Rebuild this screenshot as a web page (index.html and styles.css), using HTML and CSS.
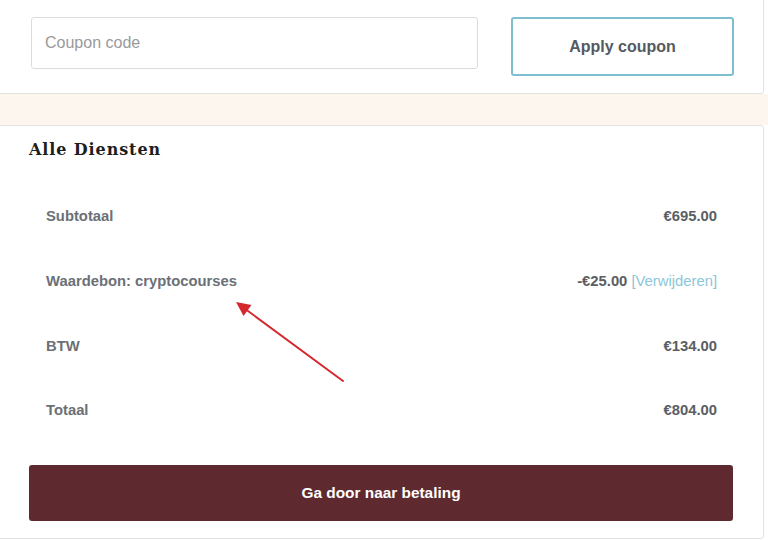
FILE: index.html
```html
<!DOCTYPE html>
<html lang="nl">
<head>
<meta charset="utf-8">
<title>Winkelwagen</title>
<link rel="stylesheet" href="styles.css">
</head>
<body>
<div class="page">
  <section class="card coupon-card">
    <div class="coupon-row">
      <input class="coupon-input" type="text" placeholder="Coupon code">
      <button class="btn-apply" type="button">Apply coupon</button>
    </div>
  </section>
  <div class="band"></div>
  <section class="card totals-card">
    <h2 class="totals-title">Alle Diensten</h2>
    <div class="rows">
      <div class="row"><span class="label">Subtotaal</span><span class="value">€695.00</span></div>
      <div class="row"><span class="label">Waardebon: cryptocourses</span><span class="value">-€25.00 <a class="remove" href="#">[Verwijderen]</a></span></div>
      <div class="row"><span class="label">BTW</span><span class="value">€134.00</span></div>
      <div class="row"><span class="label">Totaal</span><span class="value">€804.00</span></div>
    </div>
    <button class="btn-checkout" type="button">Ga door naar betaling</button>
  </section>
  <svg class="arrow" width="768" height="540" viewBox="0 0 768 540" aria-hidden="true">
    <line x1="343" y1="385" x2="246" y2="313.5" stroke="#d4282e" stroke-width="2" stroke-linecap="round"/>
    <polygon points="236,306 251.5,309 243.5,320" fill="#d4282e"/>
  </svg>
</div>
</body>
</html>
```
FILE: styles.css
```css
* { box-sizing: border-box; }
html, body { margin: 0; padding: 0; background: #ffffff; }
body {
  font-family: "Liberation Sans", Arial, sans-serif;
  width: 768px;
  height: 540px;
  overflow: hidden;
}
.page { position: relative; width: 768px; height: 540px; }
.card {
  background: #ffffff;
  border: 1px solid #e4e2df;
  border-radius: 3px;
  margin-left: -4px;
  width: 768px;
}
.coupon-card {
  margin-top: -4px;
  height: 98px;
  padding: 20px 0 0 34px;
}
.coupon-row { display: flex; align-items: flex-start; gap: 33px; }
.coupon-input {
  width: 447px;
  height: 52px;
  border: 1px solid #dcdcdc;
  border-radius: 3px;
  padding: 0 13px;
  font-family: "Liberation Sans", Arial, sans-serif;
  font-size: 16px;
  color: #555;
  background: #fff;
  outline: none;
}
.coupon-input::placeholder { color: #9a9a9a; }
.btn-apply {
  width: 223px;
  height: 59px;
  border: 2px solid #7dbfd0;
  border-radius: 3px;
  background: #fff;
  font-family: "Liberation Sans", Arial, sans-serif;
  font-weight: bold;
  font-size: 16px;
  color: #555a60;
  padding: 0;
}
.band { height: 31px; background: #fdf6ee; }
.totals-card {
  height: 414px;
  padding: 12px 34px 0 33px;
}
.totals-title {
  margin: 0 0 0 -1px;
  font-family: "DejaVu Serif", "Liberation Serif", serif;
  font-weight: bold;
  font-size: 16px;
  line-height: 24px;
  letter-spacing: 0.9px;
  color: #1e1e1e;
}
.rows { margin-top: 22px; padding: 0 12px 0 16px; }
.row {
  display: flex;
  justify-content: space-between;
  align-items: center;
  height: 64.7px;
  font-size: 14.8px;
  font-weight: bold;
}
.label { color: #6b7077; }
.value { color: #5a5e63; }
.remove { color: #8cc6d7; font-weight: normal; text-decoration: none; }
.btn-checkout {
  display: block;
  margin-top: 22px;
  margin-left: -1px;
  width: 704px;
  height: 56px;
  border: none;
  border-radius: 3px;
  background: #5e2a2f;
  color: #ffffff;
  font-family: "Liberation Sans", Arial, sans-serif;
  font-weight: bold;
  font-size: 15.4px;
}
.arrow { position: absolute; left: 0; top: 0; pointer-events: none; }
```
